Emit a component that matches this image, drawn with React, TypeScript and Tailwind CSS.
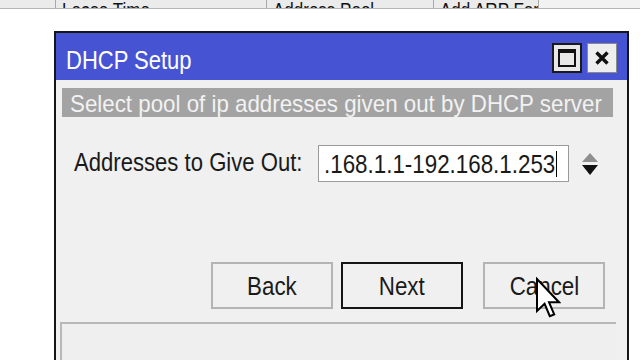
import React from 'react';

const font = "font-['Liberation_Sans',Arial,sans-serif]";

// video frame is squeezed horizontally, so text gets a scale-x
function Txt({ children, className }: { children: React.ReactNode; className: string }) {
  return <span className={`inline-block whitespace-nowrap leading-none ${className}`}>{children}</span>;
}

function Cursor() {
  return (
    <svg className="absolute left-[535px] top-[277px]" width="26" height="42" viewBox="0 0 13 21">
      <path
        d="M1 1 L1 17 L4.8 13.4 L7.4 19.6 L9.6 18.7 L7 12.6 L12 12.6 Z"
        fill="#fff"
        stroke="#000"
        strokeWidth="1"
        strokeLinejoin="miter"
      />
    </svg>
  );
}

export default function App() {
  return (
    <div className={`relative w-[640px] h-[360px] overflow-hidden bg-white ${font}`}>
      {/* list header behind the dialog, cut off at the top */}
      <div className="flex h-[9px] bg-[#ebebeb] border-b border-[#b5b5b5] text-[#111]">
        <div className="w-[56px] border-r border-[#a8a8a8]" />
        <div className="w-[211px] border-r border-[#a8a8a8] overflow-hidden pl-[6px]">
          <Txt className="-mt-[16px] text-[20px] origin-left scale-x-[0.85]">Lease Time</Txt>
        </div>
        <div className="w-[167px] border-r border-[#a8a8a8] overflow-hidden pl-[6px]">
          <Txt className="-mt-[16px] text-[20px] origin-left scale-x-[0.85]">Address Pool</Txt>
        </div>
        <div className="w-[105px] border-r border-[#a8a8a8] overflow-hidden pl-[6px]">
          <Txt className="-mt-[16px] text-[20px] origin-left scale-x-[0.85]">Add ARP For Leases</Txt>
        </div>
        <div className="flex-1 bg-[#f2f2f2]" />
      </div>

      {/* DHCP Setup dialog */}
      <div className="ml-[54px] mt-[22px] w-[575px] h-[340px] border-2 border-b-0 border-[#151515] bg-[#f0f0f0] flex flex-col">
        {/* title bar */}
        <div className="h-[47px] bg-[#4654d4] flex items-start pl-[10px] pr-[10px]">
          <Txt className="mt-[15px] text-[25px] text-white origin-left scale-x-[0.88]">DHCP Setup</Txt>
          <div className="ml-auto mt-[10px] flex gap-[5px]">
            <div className="w-[30px] h-[30px] border-2 border-[#1a1a1a] bg-[#e8e8e8] flex items-center justify-center">
              <div className="w-[18px] h-[18px] border-2 border-t-[4px] border-[#111]" />
            </div>
            <div className="w-[30px] h-[30px] border border-[#8a8a8a] bg-[#eeeeee] flex items-center justify-center">
              <svg width="16" height="16" viewBox="0 0 16 16">
                <path d="M2.5 2.5 L13.5 13.5 M13.5 2.5 L2.5 13.5" stroke="#111" strokeWidth="3.4" />
              </svg>
            </div>
          </div>
        </div>

        {/* body */}
        <div className="flex-1 flex flex-col pt-[8px]">
          <div className="ml-[6px] w-[551px] h-[29px] bg-[#a3a3a3] pl-[8px] flex items-center">
            <Txt className="mt-[2px] text-[24px] text-[#f2f2f2] origin-left scale-x-[0.93]">
              Select pool of ip addresses given out by DHCP server
            </Txt>
          </div>

          <div className="mt-[28px] h-[37px] flex items-center">
            <div className="w-[262px] pl-[18px] text-[#1a1a1a]">
              <Txt className="text-[26px] origin-left scale-x-[0.85]">Addresses to Give Out:</Txt>
            </div>
            <div className="w-[251px] h-[37px] bg-white border border-[#9a9a9a] flex items-center pl-[5px] overflow-hidden">
              <div className="w-[232px] flex items-center">
                <Txt className="text-[26px] text-[#1a1a1a] origin-left scale-x-[0.86]">.168.1.1-192.168.1.253</Txt>
              </div>
              <div className="w-[1px] h-[26px] bg-black" />
            </div>
            <svg className="ml-[11px]" width="20" height="28" viewBox="0 0 20 28">
              <path d="M10 3 L18 12 L2 12 Z" fill="#8f8f8f" />
              <path d="M2 15 L18 15 L10 25 Z" fill="#111" />
            </svg>
          </div>

          <div className="mt-[80px] flex justify-end gap-[8px] pr-[22px] text-[#1a1a1a]">
            <button className="w-[122px] h-[47px] border-2 border-[#b4b4b4] bg-[#f0f0f0] flex items-center justify-center">
              <Txt className="text-[26px] scale-x-[0.86]">Back</Txt>
            </button>
            <button className="w-[122px] h-[47px] border-2 border-[#151515] bg-[#f0f0f0] flex items-center justify-center mr-[12px]">
              <Txt className="text-[26px] scale-x-[0.86]">Next</Txt>
            </button>
            <button className="w-[122px] h-[47px] border-2 border-[#b4b4b4] bg-[#f0f0f0] flex items-center justify-center">
              <Txt className="text-[26px] scale-x-[0.86]">Cancel</Txt>
            </button>
          </div>

          <div className="mt-[13px] ml-[4px] w-[556px] flex-1 border-t-2 border-l-2 border-[#b8b8b8] bg-[#efefef]" />
        </div>
      </div>

      <Cursor />
    </div>
  );
}
